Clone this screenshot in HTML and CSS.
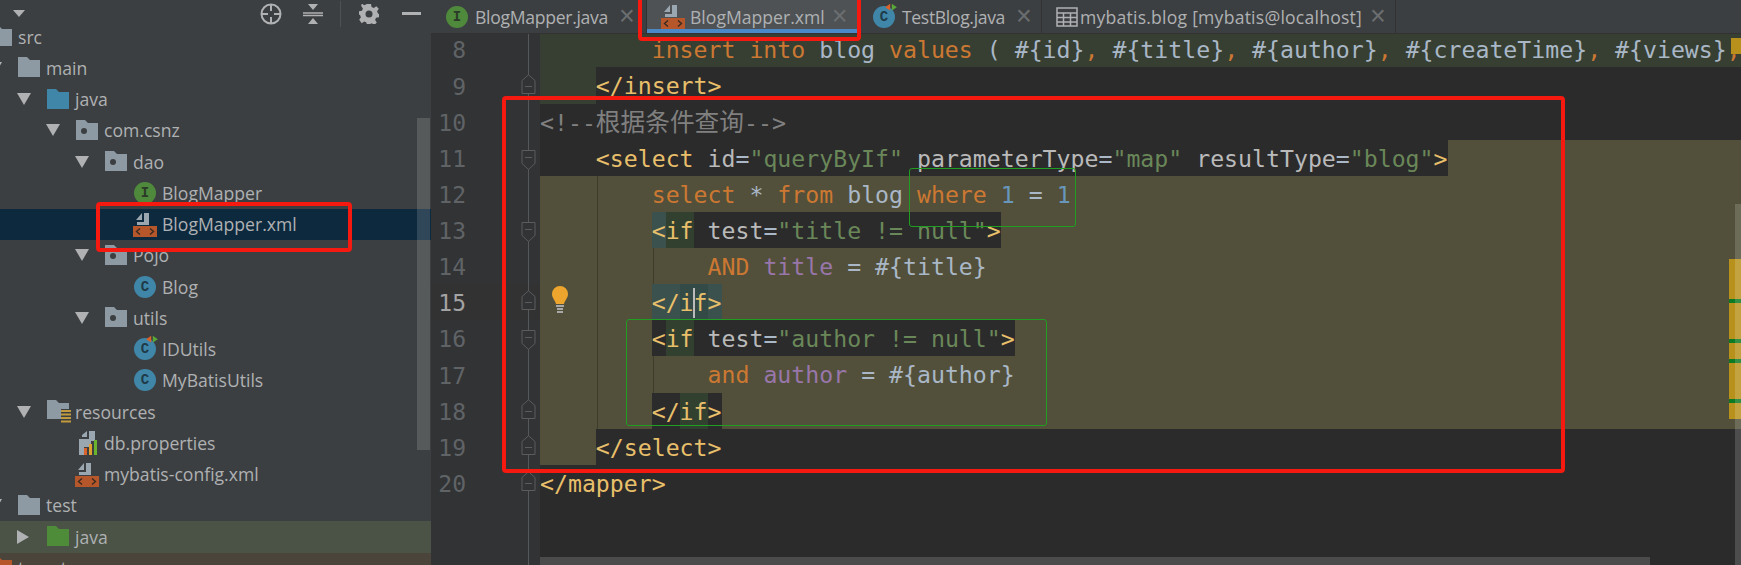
FILE: index.html
```html
<!DOCTYPE html>
<html lang="en">
<head>
<meta charset="utf-8">
<title>BlogMapper.xml</title>
<link rel="stylesheet" href="styles.css">
</head>
<body>
<svg class="defs" width="0" height="0">
  <symbol id="folder" viewBox="0 0 22 20"><path d="M0 0h9l3 3h10v17H0z" fill="currentColor"/></symbol>
  <symbol id="pkg" viewBox="0 0 22 20"><path d="M0 0h9l3 3h10v17H0z" fill="#8d9aa3"/><circle cx="8" cy="11" r="3" fill="#3c3f41"/></symbol>
  <symbol id="xml" viewBox="0 0 24 25"><path d="M9 1v7H3zM11 1h5v12H4v-3h7z" fill="#9aa7b0"/><rect y="14" width="24" height="11" fill="#b5562b"/><path d="M7 16.500l-3.500 3 3.500 3M17 16.500l3.500 3-3.500 3" stroke="#3a2a20" stroke-width="1.400" fill="none"/></symbol>
  <symbol id="foldup" viewBox="0 0 15 24"><path d="M1 19.500V6.500L7.500 .8 14 6.500v13z" fill="#313335" stroke="#5a5c5e"/><path d="M4 12.500h7" stroke="#5a5c5e"/></symbol>
  <symbol id="folddown" viewBox="0 0 15 24"><path d="M1 4.500h13v13l-6.500 6-6.500-6z" fill="#313335" stroke="#5a5c5e"/><path d="M4 11.500h7" stroke="#5a5c5e"/></symbol>
  <symbol id="mark" viewBox="0 0 14 12"><path d="M6 1v8L0 5z" fill="#d9622b"/><path d="M8 1v8l6-4z" fill="#59a83a"/></symbol>
</svg>

<div class="ide">
  <aside class="side">
    <div class="side-head">
      <span class="head-caret"></span>
      <svg class="hicon target" width="22" height="22" viewBox="0 0 22 22"><circle cx="11" cy="11" r="9.500" fill="none" stroke="#afb1b3" stroke-width="2"/><path d="M11 1v7M11 14v7M1 11h7M14 11h7" stroke="#afb1b3" stroke-width="2"/></svg>
      <svg class="hicon collapse" width="20" height="20" viewBox="0 0 20 20"><path d="M0 9h20M0 11.500h20" stroke="#afb1b3" stroke-width="1.500"/><path d="M5 0h10l-5 6zM5 20h10l-5-6z" fill="#afb1b3"/></svg>
      <span class="head-sep"></span>
      <svg class="hicon gear" width="20" height="20" viewBox="0 0 20 20"><path d="M8 0h4l.6 3 2.200.9 2.500-1.700 2.500 2.500-1.700 2.500.9 2.200 1 .6v3.200l-3 .6-.9 2.200 1.700 2.500-2.500 2.500-2.500-1.700-2.200.9-.6 1.300H8l-.6-3-2.200-.9-2.500 1.700L.2 15.800l1.700-2.500-.9-2.200-1-.6V7.300l3-.6.9-2.200-1.700-2.500L2.700-.5l2.500 1.700 2.200-.9z" fill="#afb1b3"/><circle cx="10" cy="10" r="3.500" fill="#3c3f41"/></svg>
      <span class="minus"></span>
    </div>
    <div class="tree">
      <div class="row d0"><span class="arrow"></span><svg class="ic fold-gray"><use href="#folder"/></svg><span>src</span></div>
      <div class="row d1"><span class="arrow down"></span><svg class="ic fold-gray"><use href="#folder"/></svg><span>main</span></div>
      <div class="row d2"><span class="arrow down"></span><svg class="ic fold-blue"><use href="#folder"/></svg><span>java</span></div>
      <div class="row d3"><span class="arrow down"></span><svg class="ic"><use href="#pkg"/></svg><span>com.csnz</span></div>
      <div class="row d4"><span class="arrow down"></span><svg class="ic"><use href="#pkg"/></svg><span>dao</span></div>
      <div class="row d5"><span class="arrow"></span><span class="badge green">I</span><span>BlogMapper</span></div>
      <div class="row d5 selected"><span class="arrow"></span><svg class="ic-xml"><use href="#xml"/></svg><span>BlogMapper.xml</span></div>
      <div class="row d4"><span class="arrow down"></span><svg class="ic"><use href="#pkg"/></svg><span>Pojo</span></div>
      <div class="row d5"><span class="arrow"></span><span class="badge blue">C</span><span>Blog</span></div>
      <div class="row d4"><span class="arrow down"></span><svg class="ic"><use href="#pkg"/></svg><span>utils</span></div>
      <div class="row d5"><span class="arrow"></span><span class="badge blue">C<svg class="mark"><use href="#mark"/></svg></span><span>IDUtils</span></div>
      <div class="row d5"><span class="arrow"></span><span class="badge blue">C</span><span>MyBatisUtils</span></div>
      <div class="row d2"><span class="arrow down"></span>
        <svg class="ic-res" viewBox="0 0 24 24"><path d="M0 0h9l3 3h10v6H14v10H0z" fill="#8d9aa3"/><path d="M14 10h10v2H14zM14 13.500h10v2H14zM14 17h10v2H14zM14 20.500h10v2H14z" fill="#c09a3e"/></svg><span>resources</span></div>
      <div class="row d3"><span class="arrow"></span>
        <svg class="ic-res" viewBox="0 0 24 24"><path d="M6 4l5-4v6H6zM13 0h6v10h-4v6H8v8H3V8h10z" fill="#9aa7b0"/><path d="M8 17h3v7H8z" fill="#d9622b"/><path d="M13 13h3v11h-3z" fill="#e0a030"/><path d="M18 9h3v15h-3z" fill="#69b32e"/></svg><span>db.properties</span></div>
      <div class="row d3"><span class="arrow"></span><svg class="ic-xml"><use href="#xml"/></svg><span>mybatis-config.xml</span></div>
      <div class="row d1"><span class="arrow down"></span><svg class="ic fold-gray"><use href="#folder"/></svg><span>test</span></div>
      <div class="row d2 tested"><span class="arrow right"></span><svg class="ic fold-green"><use href="#folder"/></svg><span>java</span></div>
      <div class="row d0 excluded"><span class="arrow"></span><svg class="ic fold-orange"><use href="#folder"/></svg><span>target</span></div>
    </div>
    <div class="side-scroll"></div>
  </aside>

  <main class="main">
    <nav class="tabs">
      <div class="tab t1"><span class="badge green">I</span><span class="tab-name">BlogMapper.java</span><span class="x">×</span></div>
      <div class="tab t2 active"><svg class="ic-xml"><use href="#xml"/></svg><span class="tab-name">BlogMapper.xml</span><span class="x">×</span></div>
      <div class="tab t3"><span class="badge blue">C<svg class="mark"><use href="#mark"/></svg></span><span class="tab-name">TestBlog.java</span><span class="x">×</span></div>
      <div class="tab t4"><svg class="ic-table" viewBox="0 0 22 20"><path d="M1 1h20v18H1zM1 6h20M1 10.500h20M1 15h20M7.500 6v13M14.500 6v13" fill="none" stroke="#afb1b3" stroke-width="1.500"/></svg><span class="tab-name">mybatis.blog [mybatis@localhost]</span><span class="x">×</span></div>
    </nav>

    <section class="editor">
      <div class="lines">
        <div class="line"><div class="gut"><span class="num">8</span></div><div class="code bg-green">        <span class="k">insert into</span> <span class="p">blog</span> <span class="k">values</span> <span class="p">( #{id}</span><span class="k">,</span> <span class="p">#{title}</span><span class="k">,</span> <span class="p">#{author}</span><span class="k">,</span> <span class="p">#{createTime}</span><span class="k">,</span> <span class="p">#{views}</span><span class="k">,</span></div></div>
        <div class="line"><div class="gut"><span class="num">9</span><svg class="fm"><use href="#foldup"/></svg></div><div class="code"><span class="cell bg-green">    </span><span class="t">&lt;/insert&gt;</span></div></div>
        <div class="line"><div class="gut"><span class="num">10</span></div><div class="code"><span class="c">&lt;!--<span class="cjk">根据条件查询</span>--&gt;</span></div></div>
        <div class="line"><div class="gut"><span class="num">11</span><svg class="fm"><use href="#folddown"/></svg></div><div class="code bg-olive"><span class="cell bg-dark">    <span class="t">&lt;select</span> <span class="a">id</span><span class="p">=</span><span class="v">"queryByIf"</span> <span class="a">parameterType</span><span class="p">=</span><span class="v">"map"</span> <span class="a">resultType</span><span class="p">=</span><span class="v">"blog"</span><span class="t">&gt;</span></span></div></div>
        <div class="line"><div class="gut"><span class="num">12</span></div><div class="code bg-olive g1">        <span class="k">select</span> <span class="p">*</span> <span class="k">from</span> <span class="p">blog</span> <span class="k">where</span> <span class="n">1</span> <span class="p">=</span> <span class="n">1</span></div></div>
        <div class="line"><div class="gut"><span class="num">13</span><svg class="fm"><use href="#folddown"/></svg></div><div class="code bg-olive g1">        <span class="cell bg-dark"><span class="cell t hl-teal">&lt;</span><span class="cell t hl-green">if</span> <span class="a">test</span><span class="p">=</span><span class="v">"title != null"</span><span class="t">&gt;</span></span></div></div>
        <div class="line"><div class="gut"><span class="num">14</span></div><div class="code bg-olive g2">            <span class="k">AND</span> <span class="m">title</span> <span class="p">= #{title}</span></div></div>
        <div class="line current"><div class="gut"><span class="num">15</span><svg class="fm"><use href="#foldup"/></svg></div><div class="code bg-olive g1"><svg class="bulb" viewBox="0 0 16 28"><path d="M8 0a8 8 0 0 1 8 8c0 4-3 6-4 10H4C3 14 0 12 0 8a8 8 0 0 1 8-8z" fill="#eda52d"/><path d="M4 20h8M5 23h6M5 26h6" stroke="#a9a9a9" stroke-width="2"/></svg>        <span class="cell t hl-teal">&lt;/</span><span class="cell t hl-teal2">i<span class="caret"></span>f</span><span class="cell t hl-teal">&gt;</span></div></div>
        <div class="line"><div class="gut"><span class="num">16</span><svg class="fm"><use href="#folddown"/></svg></div><div class="code bg-olive g1">        <span class="cell bg-dark"><span class="t">&lt;</span><span class="cell t hl-green">if</span> <span class="a">test</span><span class="p">=</span><span class="v">"author != null"</span><span class="t">&gt;</span></span></div></div>
        <div class="line"><div class="gut"><span class="num">17</span></div><div class="code bg-olive g2">            <span class="k">and</span> <span class="m">author</span> <span class="p">= #{author}</span></div></div>
        <div class="line"><div class="gut"><span class="num">18</span><svg class="fm"><use href="#foldup"/></svg></div><div class="code bg-olive g1">        <span class="cell bg-dark"><span class="t">&lt;/</span><span class="cell t hl-green">if</span><span class="t">&gt;</span></span></div></div>
        <div class="line"><div class="gut"><span class="num">19</span><svg class="fm"><use href="#foldup"/></svg></div><div class="code"><span class="cell bg-olive">    </span><span class="t">&lt;/select&gt;</span></div></div>
        <div class="line"><div class="gut"><span class="num">20</span><svg class="fm"><use href="#foldup"/></svg></div><div class="code"><span class="t">&lt;/mapper&gt;</span></div></div>
        <div class="line"><div class="gut"></div><div class="code"></div></div>
        <div class="line"><div class="gut"></div><div class="code"></div></div>
      </div>
      <div class="h-scroll"></div>
      <div class="stripes">
        <span class="st-top"></span>
        <span class="st-band"></span>
        <span class="st-line s1"></span><span class="st-line s2"></span><span class="st-line s3"></span><span class="st-line s4"></span>
        <span class="v-scroll"></span>
      </div>
    </section>
  </main>
</div>

<div class="box red r-tab"></div>
<div class="box red r-side"></div>
<div class="box red r-code"></div>
<div class="box grn g-where"></div>
<div class="box grn g-if"></div>
</body>
</html>
```

FILE: styles.css
```css
* { box-sizing: border-box; }
html, body { margin: 0; height: 565px; overflow: hidden; background: #2b2b2b; }
body { position: relative; font-family: "Open Sans", "Noto Sans", sans-serif; }
.defs { position: absolute; }

.ide { display: flex; height: 565px; }

/* Project panel */
.side { position: relative; width: 431px; flex: none; background: #3c3f41; overflow: hidden; color: #afb1b3; font-size: 17.600px; }
.side-head { position: relative; display: flex; align-items: center; height: 21.400px; padding-top: 6px; }
.head-caret { width: 0; height: 0; margin-left: 13px; border: 6.500px solid transparent; border-top: 7px solid #afb1b3; border-bottom: 0; }
.hicon { flex: none; }
.target { margin-left: 235px; }
.collapse { margin-left: 21px; }
.head-sep { width: 1px; height: 26px; margin-left: 17px; background: #4f5254; }
.gear { margin-left: 18px; }
.minus { width: 19px; height: 3px; margin-left: 23px; background: #afb1b3; }

.tree { margin-left: -40px; }
.row { display: flex; align-items: center; height: 31.250px; white-space: nowrap; padding-bottom: 1px; }
.d0 { padding-left: 0; }
.d1 { padding-left: 28px; }
.d2 { padding-left: 57px; }
.d3 { padding-left: 86px; }
.d4 { padding-left: 115px; }
.d5 { padding-left: 144px; }
.selected { background: #0d293e; }
.tested { background: #4a5346; }
.excluded { background: #4a443a; }

.arrow { flex: none; width: 30px; height: 12px; position: relative; }
.arrow.down::before { content: ""; position: absolute; left: 0; top: 0; border: 7px solid transparent; border-top: 12px solid #afb1b3; border-bottom: 0; }
.arrow.right::before { content: ""; position: absolute; left: 0; top: -1px; border: 7px solid transparent; border-left: 12px solid #afb1b3; border-right: 0; }

.ic { flex: none; width: 22px; height: 20px; margin-right: 6px; margin-top: -1px; }
.fold-gray { color: #8d9aa3; }
.fold-blue { color: #3f86a8; }
.fold-green { color: #4f8c3a; }
.fold-orange { color: #b5562b; }
.ic-xml { flex: none; width: 24px; height: 25px; margin: 0 5px 0 -1px; }
.ic-res { flex: none; width: 24px; height: 24px; margin: 0 4px 0 0; }

.badge { position: relative; flex: none; display: flex; align-items: center; justify-content: center; width: 22px; height: 22px; margin-right: 6px; border-radius: 50%; font: bold 14px "Liberation Mono", monospace; }
.badge.green { background: #4f8a3c; color: #2b3a28; }
.badge.blue { background: #3f86a8; color: #1f3a48; }
.mark { position: absolute; right: -2px; top: -3px; width: 12px; height: 10px; }

.side-scroll { position: absolute; left: 417px; top: 118px; width: 13px; height: 332px; background: rgba(255, 255, 255, .14); }

/* Main */
.main { flex: 1; min-width: 0; display: flex; flex-direction: column; }
.tabs { display: flex; height: 33.500px; flex: none; background: #3c3f41; border-bottom: 1px solid #323232; color: #afb1b3; font-size: 17.600px; padding-left: 1px; }
.tab { display: flex; align-items: center; height: 33px; white-space: nowrap; border-right: 1px solid #323232; padding-left: 14px; }
.tab .badge { margin-right: 7px; }
.tab .x { margin-left: 7px; font: 27px/1 "Liberation Sans", sans-serif; color: #6b6e70; }
.t1 { width: 215px; }
.t1 .tab-name { letter-spacing: -.3px; }
.t1 .x { margin-left: 11px; }
.t2 { width: 211px; }
.t2 .ic-xml { margin: 0 5px 0 0; }
.t3 { width: 184px; padding-left: 15px; }
.t3 .tab-name { letter-spacing: -.35px; }
.t3 .x { margin-left: 11px; }
.t4 { width: 354px; padding-left: 14px; }
.t4 .tab-name { letter-spacing: .22px; }
.t4 .x { margin-left: 8px; }
.ic-table { width: 22px; height: 20px; margin-right: 2px; flex: none; }
.active { background: #4e5254; border-bottom: 4px solid #4a88c7; padding-bottom: 0; }
.active > * { position: relative; top: 2px; }

/* Editor */
.editor { position: relative; flex: 1; min-height: 0; overflow: hidden; }
.lines { margin-top: -2.200px; font: 23.200px/38px "DejaVu Sans Mono", "Noto Sans CJK SC", monospace; color: #a9b7c6; }
.line { display: flex; height: 36.140px; }
.gut { flex: none; width: 109px; display: flex; align-items: center; background: #313335 linear-gradient(#55585a, #55585a) 97px 0 / 1px 100% no-repeat; }
.current .gut { background-color: #323232; }
.num { width: 35px; padding-top: 2px; text-align: right; font-size: 23px; color: #606366; }
.current .num { color: #a4a3a3; }
.fm { width: 15px; height: 24px; margin-left: 55px; flex: none; }
.code { position: relative; flex: 1; white-space: pre; height: 36.140px; overflow: visible; }
.cell { display: inline-block; vertical-align: top; height: 36.140px; }
.cjk { font-size: 24.700px; }
.bg-green { background-color: #373f33; }
.bg-olive { background-color: #52503a; }
.bg-dark { background-color: #2b2b2b; }
.hl-teal { background-color: #3b514d; }
.hl-teal2 { background-color: #344a46; position: relative; }
.hl-green { background-color: #32402f; }
.g1 { background-image: linear-gradient(#3e3d2c, #3e3d2c); background-size: 1px 100%; background-position: 57px 0; background-repeat: no-repeat; }
.g2 { background-image: linear-gradient(#3e3d2c, #3e3d2c), linear-gradient(#3e3d2c, #3e3d2c); background-size: 1px 100%, 1px 100%; background-position: 57px 0, 113px 0; background-repeat: no-repeat; }
.caret { position: absolute; left: 13px; top: 4px; width: 2.500px; height: 30px; background: #bbbbbb; }
.bulb { position: absolute; left: 12px; top: 2px; width: 16px; height: 28px; }

.k { color: #cc7832; }
.p { color: #a9b7c6; }
.t { color: #e8bf6a; }
.a { color: #bababa; }
.v { color: #6a8759; }
.c { color: #808080; }
.n { color: #6897bb; }
.m { color: #9876aa; }

.h-scroll { position: absolute; left: 109px; right: 91px; bottom: 0; height: 8px; background: #4b4b4b; }
.stripes { position: absolute; inset: 0; pointer-events: none; }
.st-top { position: absolute; right: 0; top: 4px; width: 10px; height: 16px; background: #b8911c; }
.st-band { position: absolute; right: 0; top: 225px; width: 12px; height: 160px; background: #b8911c; }
.st-line { position: absolute; right: 0; width: 12px; height: 4px; background: #0b7a22; }
.s1 { top: 265px; }
.s2 { top: 305px; }
.s3 { top: 325px; }
.s4 { top: 365px; }
.v-scroll { position: absolute; right: 0; top: 170px; bottom: 0; width: 6px; background: rgba(255, 255, 255, .16); }

/* Hand-drawn annotations over the screenshot */
.box { position: absolute; pointer-events: none; }
.red { border: 4px solid #f5190f; border-radius: 4px; }
.grn { border: 1px solid #1f9e22; border-radius: 3px; }
.r-tab { left: 638px; top: -6px; width: 223px; height: 47px; }
.r-side { left: 96px; top: 202px; width: 256px; height: 50px; }
.r-code { left: 502px; top: 96px; width: 1063px; height: 377px; }
.g-where { left: 909px; top: 168px; width: 167px; height: 59px; }
.g-if { left: 626px; top: 319px; width: 421px; height: 107px; }
```
